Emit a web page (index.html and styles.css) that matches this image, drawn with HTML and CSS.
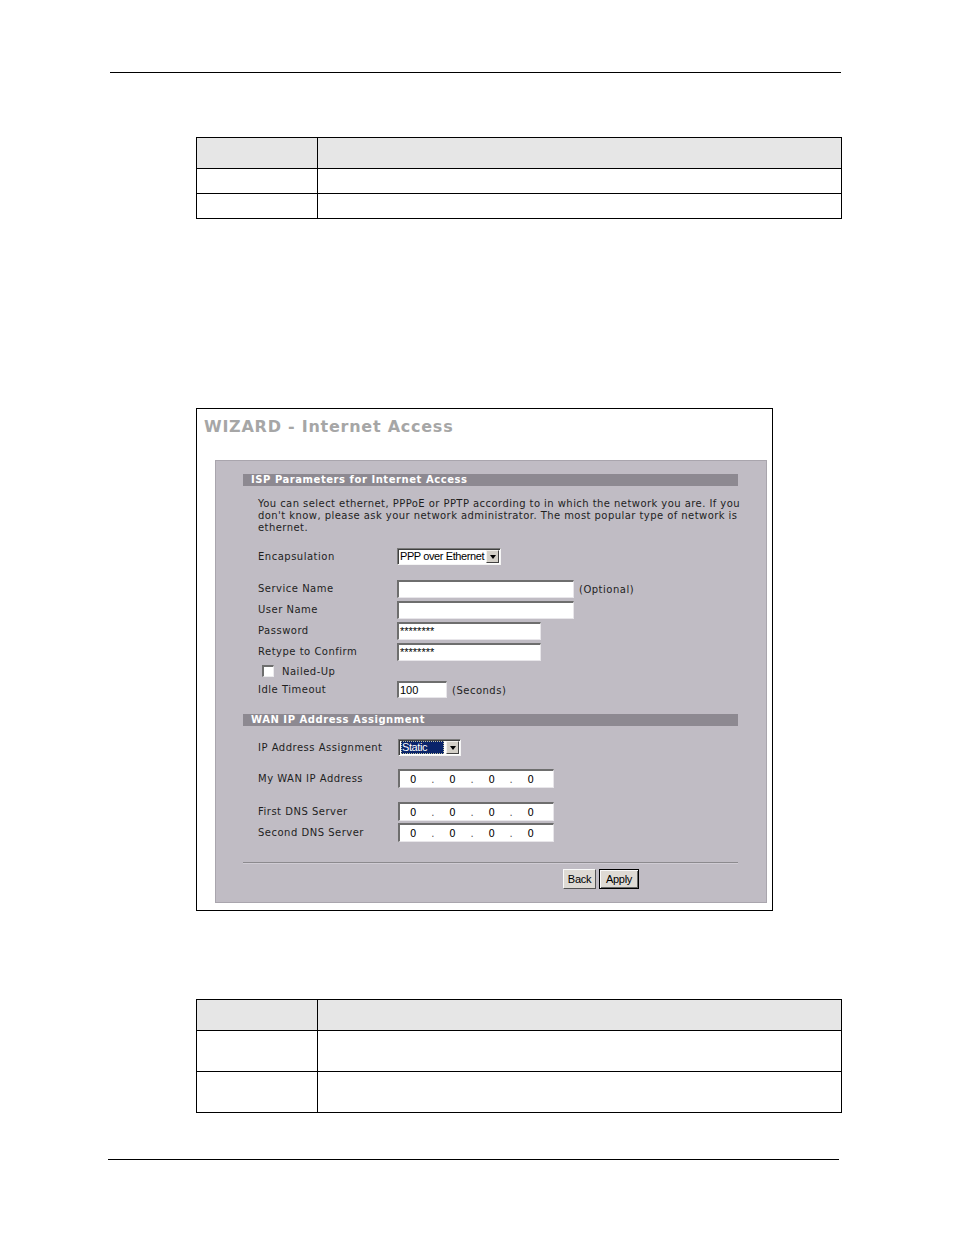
FILE: index.html
```html
<!DOCTYPE html>
<html>
<head>
<meta charset="utf-8">
<link rel="stylesheet" href="styles.css">
</head>
<body>
<div class="page">
  <div class="rule rule-top"></div>

  <table class="doc-table t1">
    <tr class="head"><td class="c1"></td><td></td></tr>
    <tr class="r25"><td class="c1"></td><td></td></tr>
    <tr class="r25"><td class="c1"></td><td></td></tr>
  </table>

  <div class="wizard">
    <div class="wiz-title">WIZARD - Internet Access</div>
    <div class="panel">
      <div class="bar bar1">ISP Parameters for Internet Access</div>
      <div class="desc">You can select ethernet, PPPoE or PPTP according to in which the network you are. If you don't know, please ask your network administrator. The most popular type of network is ethernet.</div>

      <div class="row r-encap">
        <div class="lbl">Encapsulation</div>
        <div class="select sel-encap"><span class="sel-text">PPP over Ethernet</span><span class="sel-btn"><span class="tri"></span></span></div>
      </div>

      <div class="row r-in r-first">
        <div class="lbl">Service Name</div>
        <div class="input w-long"></div>
        <span class="note">(Optional)</span>
      </div>
      <div class="row r-in">
        <div class="lbl">User Name</div>
        <div class="input w-long"></div>
      </div>
      <div class="row r-in">
        <div class="lbl">Password</div>
        <div class="input w-mid"><span class="val">********</span></div>
      </div>
      <div class="row r-in">
        <div class="lbl">Retype to Confirm</div>
        <div class="input w-mid"><span class="val">********</span></div>
      </div>
      <div class="row r-check">
        <span class="checkbox"></span><span class="check-lbl">Nailed-Up</span>
      </div>
      <div class="row r-idle">
        <div class="lbl">Idle Timeout</div>
        <div class="input w-short"><span class="val">100</span></div>
        <span class="note">(Seconds)</span>
      </div>

      <div class="bar bar2">WAN IP Address Assignment</div>

      <div class="row r-assign">
        <div class="lbl">IP Address Assignment</div>
        <div class="select sel-static"><span class="sel-text hl">Static</span><span class="sel-btn"><span class="tri"></span></span></div>
      </div>

      <div class="row r-ip r-wan">
        <div class="lbl">My WAN IP Address</div>
        <div class="ipbox"><span>0</span><span class="dot">.</span><span>0</span><span class="dot">.</span><span>0</span><span class="dot">.</span><span>0</span></div>
      </div>
      <div class="row r-ip r-dns1">
        <div class="lbl">First DNS Server</div>
        <div class="ipbox"><span>0</span><span class="dot">.</span><span>0</span><span class="dot">.</span><span>0</span><span class="dot">.</span><span>0</span></div>
      </div>
      <div class="row r-ip">
        <div class="lbl">Second DNS Server</div>
        <div class="ipbox"><span>0</span><span class="dot">.</span><span>0</span><span class="dot">.</span><span>0</span><span class="dot">.</span><span>0</span></div>
      </div>

      <div class="sep"></div>
      <div class="buttons">
        <span class="btn btn-back">Back</span>
        <span class="btn btn-apply">Apply</span>
      </div>
    </div>
  </div>

  <table class="doc-table t2">
    <tr class="head"><td class="c1"></td><td></td></tr>
    <tr class="r41"><td class="c1"></td><td></td></tr>
    <tr class="r41"><td class="c1"></td><td></td></tr>
  </table>

  <div class="rule rule-bottom"></div>
</div>
</body>
</html>
```

FILE: styles.css
```css
html, body {
  margin: 0;
  padding: 0;
  background: #ffffff;
}
.page {
  width: 954px;
  height: 1235px;
  font-family: "DejaVu Sans", Verdana, sans-serif;
  overflow: hidden;
}
.rule {
  height: 1px;
  background: #000;
}
.rule-top {
  margin: 72px 0 0 110px;
  width: 731px;
}
.rule-bottom {
  margin: 46px 0 0 108px;
  width: 731px;
}
.doc-table {
  border-collapse: collapse;
  margin-left: 196px;
  width: 646px;
}
.doc-table td {
  border: 1px solid #000;
  padding: 0;
}
.doc-table .c1 {
  width: 120px;
}
.doc-table .head td {
  background: #e6e6e6;
  height: 30px;
}
.t1 {
  margin-top: 64px;
}
.t1 .r25 td {
  height: 24px;
}
.t2 {
  margin-top: 88px;
}
.t2 .r41 td {
  height: 40px;
}

/* wizard screenshot */
.wizard {
  margin: 189px 0 0 196px;
  width: 575px;
  height: 501px;
  border: 1px solid #000;
  background: #fff;
}
.wiz-title {
  padding: 8px 0 0 7px;
  height: 20px;
  line-height: 20px;
  font-size: 16px;
  font-weight: bold;
  color: #a6a6a6;
  letter-spacing: 0.75px;
}
.panel {
  margin: 23px 0 0 18px;
  height: 441px;
  border: 1px solid #a9a5ad;
  background: #c0bcc4;
  box-sizing: content-box;
  padding: 0 28px 0 27px;
  width: 495px;
  color: #1e1e1e;
  font-size: 10px;
  letter-spacing: 0.5px;
}
.bar {
  height: 12px;
  line-height: 12px;
  background: #8d8991;
  color: #fff;
  font-weight: bold;
  font-size: 10px;
  padding-left: 8px;
  letter-spacing: 0.55px;
}
.bar1 {
  margin-top: 13px;
}
.bar2 {
  margin-top: 15px;
}
.desc {
  margin-top: 12px;
  margin-right: -6px;
  padding-left: 15px;
  line-height: 12px;
  height: 36px;
  font-size: 10px;
  letter-spacing: 0.44px;
}
.row {
  display: flex;
  align-items: center;
  padding-left: 15px;
}
.lbl {
  width: 139px;
  flex: none;
}
.r-encap { margin-top: 13px; height: 19px; }
.r-first { margin-top: 12px; }
.r-in { height: 21px; }
.r-check { height: 18px; padding-left: 19px; }
.r-idle { height: 19px; }
.r-assign { margin-top: 12px; height: 19px; }
.r-ip { height: 21px; }
.r-wan { margin-top: 11px; }
.r-dns1 { margin-top: 12px; }

.input {
  height: 14px;
  background: #fff;
  border-style: solid;
  border-width: 2px 1px 1px 2px;
  border-color: #6e6e6e #e8e6ea #e8e6ea #6e6e6e;
  display: flex;
  align-items: center;
  font-family: "Liberation Sans", Arial, sans-serif;
  font-size: 11px;
  letter-spacing: 0;
  color: #000;
}
.r-in .input { height: 15px; }
.w-long { width: 174px; }
.w-mid { width: 141px; }
.w-short { width: 47px; }
.val {
  padding-left: 1px;
}
.note {
  margin-left: 5px;
  margin-top: 2px;
}

.select {
  display: flex;
  align-items: stretch;
  background: #fff;
  border-style: solid;
  border-width: 1px;
  border-color: #7a7a7a #f4f4f4 #f4f4f4 #7a7a7a;
  box-shadow: inset 1px 1px 0 #404040;
  padding: 1px 1px 1px 2px;
  height: 13px;
  font-family: "Liberation Sans", Arial, sans-serif;
  font-size: 11px;
  letter-spacing: 0;
  color: #000;
}
.sel-encap { width: 99px; }
.sel-static { width: 58px; margin-left: 1px; }
.sel-text {
  flex: 1;
  line-height: 13px;
  letter-spacing: -0.4px;
  white-space: nowrap;
  overflow: hidden;
}
.sel-text.hl {
  background: #0a246a;
  color: #fff;
  outline: 1px dotted #c0c0a0;
  outline-offset: -1px;
  padding-left: 1px;
  margin-right: 2px;
}
.sel-btn {
  width: 13px;
  flex: none;
  background: #d4d0c8;
  border-style: solid;
  border-width: 1px;
  border-color: #f4f2ee #404040 #404040 #f4f2ee;
  box-sizing: border-box;
  display: flex;
  align-items: center;
  justify-content: center;
}
.tri {
  width: 0;
  height: 0;
  border-left: 3.5px solid transparent;
  border-right: 3.5px solid transparent;
  border-top: 4px solid #000;
}

.checkbox {
  width: 9px;
  height: 9px;
  background: #fff;
  border-style: solid;
  border-width: 2px 1px 1px 2px;
  border-color: #6e6e6e #ecebee #ecebee #6e6e6e;
}
.check-lbl {
  margin-left: 8px;
}

.ipbox {
  width: 124px;
  height: 16px;
  background: #fff;
  border-style: solid;
  border-width: 2px 1px 1px 2px;
  border-color: #6e6e6e #e8e6ea #e8e6ea #6e6e6e;
  display: flex;
  align-items: center;
  justify-content: space-between;
  padding: 0 19px 0 10px;
  margin-left: 1px;
  font-size: 10px;
  letter-spacing: 0;
  color: #000;
}
.ipbox .dot {
  color: #555;
}

.sep {
  margin-top: 19px;
  height: 1px;
  background: #8c8a8e;
  border-bottom: 1px solid #d0ccd4;
}
.buttons {
  margin-top: 5px;
  height: 20px;
  display: flex;
  gap: 3px;
  padding-left: 320px;
}
.btn {
  height: 20px;
  box-sizing: border-box;
  display: flex;
  align-items: center;
  justify-content: center;
  font-family: "Liberation Sans", Arial, sans-serif;
  font-size: 11px;
  color: #000;
  background: #dedad4;
  letter-spacing: -0.3px;
}
.btn-back {
  width: 33px;
  border-style: solid;
  border-width: 1px;
  border-color: #fafafa #555 #555 #fafafa;
}
.btn-apply {
  width: 40px;
  border: 1px solid #000;
  box-shadow: inset 1px 1px 0 #fafafa, inset -1px -1px 0 #666;
}
```
